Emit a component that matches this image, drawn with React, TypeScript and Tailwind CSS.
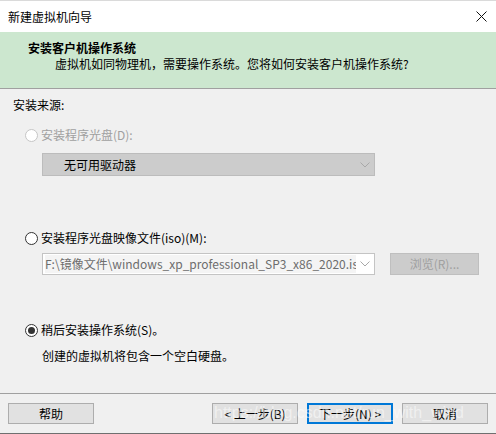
import React from 'react'

const font = { fontFamily: '"Noto Sans CJK SC", "Noto Sans", sans-serif' }

const Radio: React.FC<{ checked?: boolean; disabled?: boolean }> = ({ checked, disabled }) => (
  <span
    className={
      'flex h-[13px] w-[13px] shrink-0 items-center justify-center rounded-full border bg-white ' +
      (disabled ? 'border-[#c6c6c6]' : 'border-[#333333]')
    }
  >
    {checked && <span className="h-[7px] w-[7px] rounded-full bg-[#333333]" />}
  </span>
)

const Chevron: React.FC = () => (
  <svg width="10" height="6" viewBox="0 0 10 6" className="shrink-0">
    <path d="M0.5 0.5 L5 5 L9.5 0.5" fill="none" stroke="#a8a8a8" strokeWidth="1" />
  </svg>
)

const Button: React.FC<{ label: string; primary?: boolean }> = ({ label, primary }) => (
  <button
    className={
      'flex h-[21px] w-[86px] items-center justify-center bg-[#e1e1e1] text-[12px] leading-none text-black ' +
      (primary ? 'border-2 border-[#0078d7]' : 'border border-[#adadad]')
    }
  >
    {label}
  </button>
)

export default function App() {
  return (
    <div
      className="relative flex h-[434px] w-[496px] flex-col overflow-hidden bg-[#f0f0f0] text-[12px] text-black"
      style={font}
    >
      {/* window title bar */}
      <div className="flex h-[32px] items-center justify-between border-t border-[#dadada] bg-white pl-[8px] pr-[9px]">
        <span className="leading-[16px]">新建虚拟机向导</span>
        <svg width="11" height="11" viewBox="0 0 11 11">
          <path d="M0.5 0.5 L10.5 10.5 M10.5 0.5 L0.5 10.5" stroke="#111" strokeWidth="1" />
        </svg>
      </div>

      {/* page header */}
      <div className="h-[57px] border-b border-[#a0a0a0] bg-[#cce7cf] pt-[8px]">
        <div className="pl-[28px] font-bold leading-[16px]">安装客户机操作系统</div>
        <div className="pl-[55px] leading-[15px]">虚拟机如同物理机，需要操作系统。您将如何安装客户机操作系统?</div>
      </div>

      {/* install source */}
      <div className="flex flex-1 flex-col pt-[8px]">
        <div className="pl-[13px] leading-[16px]">安装来源:</div>

        <div className="mt-[14px] flex h-[16px] items-center gap-[3px] pl-[25px] text-[#a0a0a0]">
          <Radio disabled />
          <span>安装程序光盘(D):</span>
        </div>
        <div className="ml-[42px] mt-[10px] flex h-[23px] w-[333px] items-center justify-between border border-[#bcbcbc] bg-[#cccccc] pl-[21px] pr-[4px]">
          <span>无可用驱动器</span>
          <Chevron />
        </div>

        <div className="mt-[54px] flex h-[16px] items-center gap-[3px] pl-[25px]">
          <Radio />
          <span>安装程序光盘映像文件(iso)(M):</span>
        </div>
        <div className="ml-[42px] mt-[7px] flex items-center gap-[15px]">
          <div className="flex h-[22px] w-[333px] items-center border border-[#c4c4c4] bg-white pl-[2px] pr-[4px]">
            <span className="h-[18px] w-[311px] overflow-hidden whitespace-nowrap bg-[#f4f4f4] leading-[18px] text-[#6d6d6d]">
              F:\镜像文件\windows_xp_professional_SP3_x86_2020.iso
            </span>
            <span className="ml-auto">
              <Chevron />
            </span>
          </div>
          <div className="flex h-[22px] w-[89px] items-center justify-center border border-[#bfbfbf] bg-[#cccccc] text-[#a0a0a0]">
            浏览(R)...
          </div>
        </div>

        <div className="mt-[47px] flex h-[16px] items-center gap-[3px] pl-[25px]">
          <Radio checked />
          <span>稍后安装操作系统(S)。</span>
        </div>
        <div className="mt-[10px] pl-[42px] leading-[16px]">创建的虚拟机将包含一个空白硬盘。</div>
      </div>

      {/* wizard buttons */}
      <div className="flex h-[41px] items-start justify-between border-b border-t border-b-[#6f6f6f] border-t-[#a0a0a0] px-[8px] pt-[9px]">
        <Button label="帮助" />
        <div className="flex gap-[9px]">
          <Button label="< 上一步(B)" />
          <Button label="下一步(N) >" primary />
          <Button label="取消" />
        </div>
      </div>

      {/* blog watermark over the buttons */}
      <div
        className="pointer-events-none absolute left-[214px] top-[403px] whitespace-nowrap text-[16px] leading-[20px] text-white/50"
        style={{ fontFamily: '"Liberation Sans", Arial, sans-serif' }}
      >
        https://blog.csdn.net/run_with_wind
      </div>
    </div>
  )
}
